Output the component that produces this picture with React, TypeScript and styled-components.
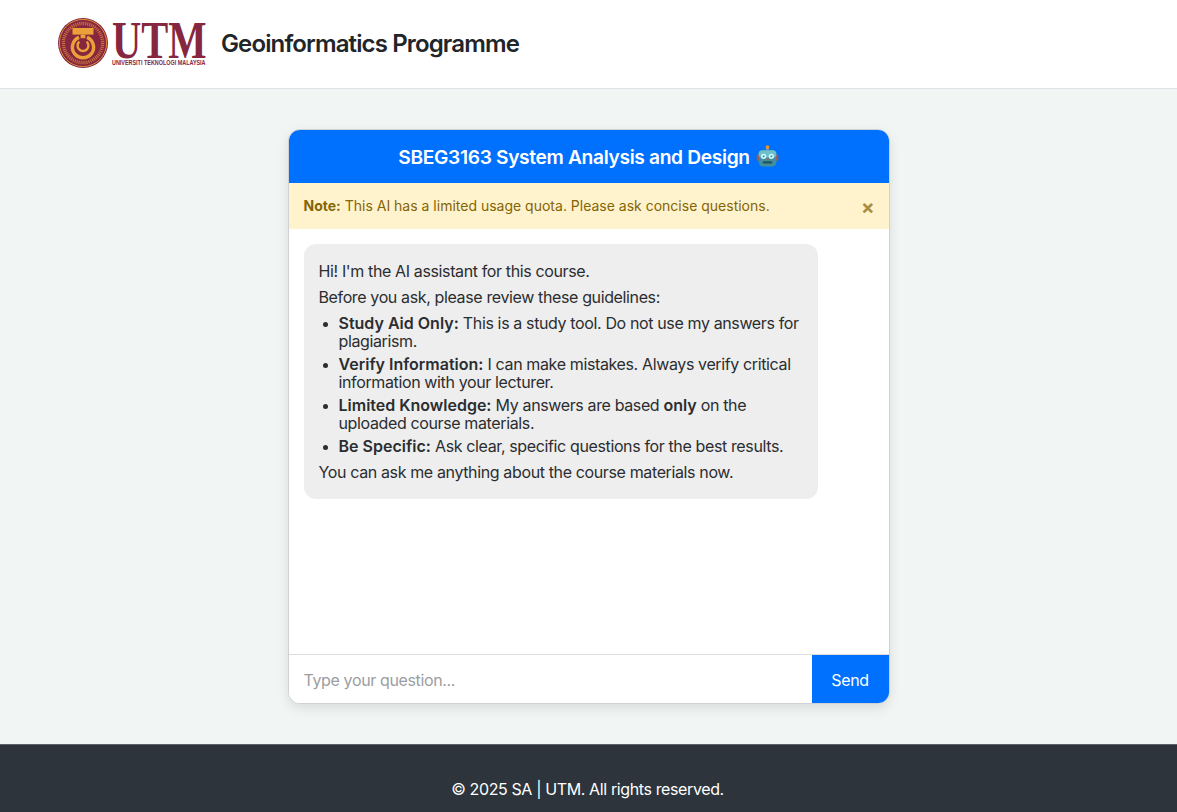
import styled, { createGlobalStyle } from "styled-components";

const GlobalStyle = createGlobalStyle`
  * {
    box-sizing: border-box;
  }
  body {
    margin: 0;
    font-family: Inter, "Liberation Sans", sans-serif;
    font-size: 16px;
    color: #212529;
    background-color: #f1f5f4;
  }
`;

const Page = styled.div`
  display: flex;
  flex-direction: column;
  min-height: 812px;
`;

const Header = styled.header`
  display: flex;
  align-items: center;
  gap: 15px;
  height: 89px;
  padding: 0 58px 2px;
  background-color: #fff;
  border-bottom: 1px solid #dee2e6;
`;

const Logo = styled.div`
  display: flex;
  align-items: center;
  gap: 4px;
  width: 148px;
  height: 50px;
  flex-shrink: 0;

  svg {
    flex-shrink: 0;
  }
`;

const LogoWords = styled.div`
  display: flex;
  flex-direction: column;
  align-items: flex-start;
  width: 94px;
  color: #86263f;
`;

const LogoName = styled.span`
  font-family: "Liberation Serif", serif;
  font-size: 53px;
  font-weight: 700;
  line-height: 38px;
  white-space: nowrap;
  transform: scaleX(0.765);
  transform-origin: left;
`;

const LogoSub = styled.span`
  font-family: "Liberation Sans", sans-serif;
  font-size: 7px;
  font-weight: 700;
  line-height: 7px;
  white-space: nowrap;
  transform: scaleX(0.775);
  transform-origin: left;
`;

const Title = styled.h1`
  margin: 0;
  font-size: 24px;
  font-weight: 600;
  letter-spacing: -0.87px;
  color: #212529;
`;

const Main = styled.main`
  flex: 1;
  display: flex;
  justify-content: center;
  padding: 40px 0;
`;

const ChatCard = styled.section`
  display: flex;
  flex-direction: column;
  width: 602px;
  height: 575px;
  background-color: #fff;
  border: 1px solid #cfd2d4;
  border-radius: 12px;
  overflow: hidden;
  box-shadow: 0 4px 12px rgba(0, 0, 0, 0.1);
`;

const ChatHeader = styled.div`
  display: flex;
  align-items: center;
  justify-content: center;
  gap: 6px;
  height: 53px;
  background-color: #0070ff;
  color: #fff;
  font-size: 19.2px;
  font-weight: 600;
  letter-spacing: -0.34px;
`;

const Notice = styled.div`
  display: flex;
  align-items: center;
  justify-content: space-between;
  height: 46px;
  padding: 0 15px 1px;
  background-color: #fff3cd;
  color: #856404;
  font-size: 14px;
`;

const CloseButton = styled.button`
  padding: 2px 0 0;
  margin-right: -1px;
  border: none;
  background: none;
  color: #856404;
  opacity: 0.7;
  font-family: inherit;
  font-size: 20px;
  font-weight: 700;
  line-height: 1;
`;

const Messages = styled.div`
  flex: 1;
  padding: 15px;
`;

const Bubble = styled.div`
  width: 514px;
  padding: 10px 15px;
  background-color: #eeeeee;
  border-radius: 12px;
  color: #2b2d30;
  font-size: 16px;
  line-height: 18px;
  letter-spacing: -0.37px;

  p {
    margin: 8px 0;
  }

  ul {
    margin: 8px 0;
    padding-left: 20px;
  }

  li {
    margin-bottom: 5px;
  }

  li::marker {
    font-size: 14px;
  }

  li:last-child {
    margin-bottom: 0;
  }

  strong {
    font-weight: 600;
    letter-spacing: 0;
  }
`;

const InputRow = styled.form`
  display: flex;
  height: 49px;
  border-top: 1px solid #dcdcdc;
`;

const QuestionInput = styled.input`
  flex: 1;
  min-width: 0;
  padding: 1px 15px 0;
  border: none;
  outline: none;
  font-family: inherit;
  font-size: 16px;
  letter-spacing: -0.37px;

  &::placeholder {
    color: #9b9ea1;
    opacity: 1;
  }
`;

const SendButton = styled.button`
  width: 77px;
  padding: 1px 0 0;
  border: none;
  background-color: #0070ff;
  color: #fff;
  font-family: inherit;
  font-size: 16px;
  font-weight: 400;
  letter-spacing: -0.3px;
`;

const Footer = styled.footer`
  display: flex;
  align-items: flex-start;
  justify-content: center;
  height: 68px;
  padding: 35px 2px 0 0;
  background-color: #2d343b;
  border-top: 1px solid #5a6066;
  color: #fff;
  font-size: 16px;
  line-height: 19px;
  letter-spacing: -0.38px;
`;

function Seal() {
  return (
    <svg width="50" height="50" viewBox="0 0 50 50" aria-hidden="true">
      <circle cx="25" cy="25" r="25" fill="#86263f" />
      <circle cx="25" cy="25" r="23.6" fill="none" stroke="#e8963a" strokeWidth="0.9" />
      <circle cx="25" cy="25" r="19.6" fill="none" stroke="#c8703f" strokeWidth="3.4" strokeDasharray="1.1 0.9" />
      <rect x="14.5" y="10" width="21" height="6.6" fill="#eda03a" />
      <rect x="22.6" y="16.6" width="4.8" height="3.6" fill="#eda03a" />
      <path d="M21 19.4a10.6 10.6 0 1 0 8 0" fill="none" stroke="#eda03a" strokeWidth="3.4" />
      <path d="M21.4 23.6a5.4 5.4 0 1 0 7.2 0" fill="none" stroke="#eda03a" strokeWidth="2.4" />
    </svg>
  );
}

function RobotFace() {
  return (
    <svg width="23" height="23" viewBox="0 0 21 22" aria-hidden="true">
      <rect x="9.4" y="1.5" width="2.2" height="4" fill="#8d9aa3" />
      <circle cx="10.5" cy="2" r="1.8" fill="#f0932b" />
      <rect x="0.2" y="9" width="2.6" height="6" rx="1" fill="#c8483c" />
      <rect x="18.2" y="9" width="2.6" height="6" rx="1" fill="#c8483c" />
      <rect x="2" y="5" width="17" height="15.5" rx="4" fill="#3f8f9c" />
      <rect x="2" y="5" width="17" height="7" rx="3.5" fill="#6cc0c6" />
      <circle cx="6.8" cy="10.8" r="2.5" fill="#dff8fb" />
      <circle cx="14.2" cy="10.8" r="2.5" fill="#dff8fb" />
      <circle cx="6.8" cy="10.8" r="1.1" fill="#1f9fe0" />
      <circle cx="14.2" cy="10.8" r="1.1" fill="#1f9fe0" />
      <rect x="9.5" y="12.6" width="2" height="1.6" rx="0.6" fill="#d9534f" />
      <rect x="6" y="15.6" width="9" height="2.2" rx="1" fill="#24525c" />
    </svg>
  );
}

export default function App() {
  return (
    <Page>
      <GlobalStyle />
      <Header>
        <Logo>
          <Seal />
          <LogoWords>
            <LogoName>UTM</LogoName>
            <LogoSub>UNIVERSITI TEKNOLOGI MALAYSIA</LogoSub>
          </LogoWords>
        </Logo>
        <Title>Geoinformatics Programme</Title>
      </Header>
      <Main>
        <ChatCard>
          <ChatHeader>
            SBEG3163 System Analysis and Design
            <RobotFace />
          </ChatHeader>
          <Notice>
            <span>
              <strong>Note:</strong> This AI has a limited usage quota. Please ask concise questions.
            </span>
            <CloseButton type="button">×</CloseButton>
          </Notice>
          <Messages>
            <Bubble>
              <p>Hi! I'm the AI assistant for this course.</p>
              <p>Before you ask, please review these guidelines:</p>
              <ul>
                <li>
                  <strong>Study Aid Only:</strong> This is a study tool. Do not use my answers for plagiarism.
                </li>
                <li>
                  <strong>Verify Information:</strong> I can make mistakes. Always verify critical information with your
                  lecturer.
                </li>
                <li>
                  <strong>Limited Knowledge:</strong> My answers are based <strong>only</strong> on the uploaded course
                  materials.
                </li>
                <li>
                  <strong>Be Specific:</strong> Ask clear, specific questions for the best results.
                </li>
              </ul>
              <p>You can ask me anything about the course materials now.</p>
            </Bubble>
          </Messages>
          <InputRow onSubmit={(e) => e.preventDefault()}>
            <QuestionInput placeholder="Type your question..." />
            <SendButton type="submit">Send</SendButton>
          </InputRow>
        </ChatCard>
      </Main>
      <Footer>© 2025 SA | UTM. All rights reserved.</Footer>
    </Page>
  );
}
